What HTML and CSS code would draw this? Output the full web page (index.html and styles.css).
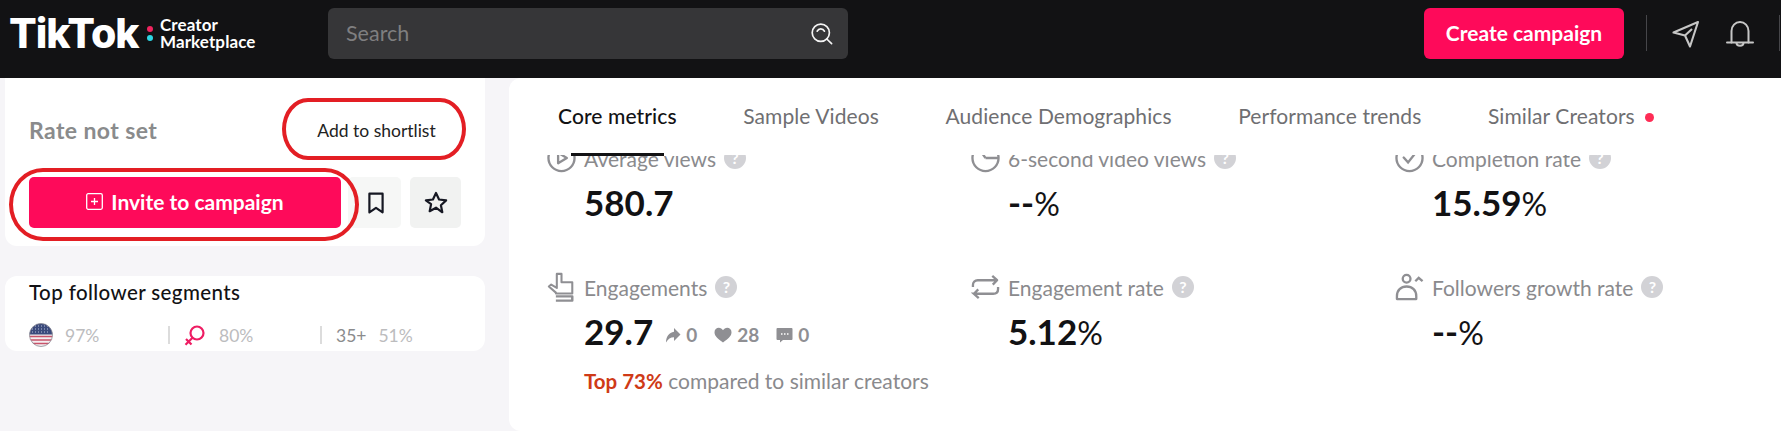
FILE: index.html
```html
<!DOCTYPE html>
<html lang="en">
<head>
<meta charset="utf-8">
<title>TikTok Creator Marketplace</title>
<link rel="stylesheet" href="styles.css">
</head>
<body>
<header class="topbar">
  <div class="logo">
    <span class="logo-word">TikTok</span>
    <span class="logo-dots"><i class="dot-pink"></i><i class="dot-cyan"></i></span>
    <span class="logo-sub"><span class="logo-line">Creator</span><span class="logo-line">Marketplace</span></span>
  </div>
  <div class="search">
    <span class="search-text">Search</span>
    <svg class="search-icon" viewBox="0 0 22 22" fill="none" stroke="#f4f4f4" stroke-width="1.7" stroke-linecap="round"><circle cx="9.8" cy="9.8" r="8.6"/><path d="M15.8 16l4.8 4.6"/><path d="M6.2 8.2c.8-1.7 2.2-2.4 3.6-2.4s2.8.7 3.6 2.4"/></svg>
  </div>
  <button class="create">Create campaign</button>
  <span class="vsep sep-a"></span>
  <svg class="top-icon send" viewBox="0 0 28 28" fill="none" stroke="#c6c6c6" stroke-width="2.1" stroke-linejoin="round"><path d="M26 2 1.5 12.5 13 15.5 18 26.5Z"/><path d="M13 15.5 20 9"/></svg>
  <svg class="top-icon bell" viewBox="0 0 28 28" fill="none" stroke="#c6c6c6" stroke-width="2" stroke-linecap="round"><path d="M1 22.5h26"/><path d="M5.5 22.5V11a8.500 9 0 0 1 17 0v11.500"/><path d="M10.5 23c0 3.500 7 3.500 7 0"/></svg>
  <span class="vsep sep-b"></span>
</header>

<main class="content">
  <aside class="sidebar">
    <section class="card card-rate">
      <div class="rate-row">
        <span class="rate">Rate not set</span>
        <button class="shortlist">Add to shortlist</button>
      </div>
      <div class="actions">
        <button class="invite">
          <svg class="plus-box" viewBox="0 0 17 17" fill="none" stroke="#fff" stroke-width="1.3"><rect x=".7" y=".7" width="15.6" height="15.6" rx="1.5"/><path d="M8.5 5v7M5 8.5h7"/></svg>
          Invite to campaign
        </button>
        <button class="square bookmark-btn">
          <svg class="act-icon" viewBox="0 0 16 20" fill="none" stroke="#161823" stroke-width="2" stroke-linejoin="round"><path d="M2 1.500h12v17l-6-4-6 4Z"/></svg>
        </button>
        <button class="square star-btn">
          <svg class="star-icon" viewBox="0 0 22 22" fill="none" stroke="#161823" stroke-width="2" stroke-linejoin="round"><path d="M11 1.800l2.800 6 6.500.8-4.800 4.400 1.300 6.500L11 15.300l-5.800 3.200 1.300-6.500L1.700 8.600l6.500-.8Z"/></svg>
        </button>
      </div>
      <span class="ring ring-shortlist"></span>
      <span class="ring ring-invite"></span>
    </section>

    <section class="card card-segments">
      <h2 class="seg-title">Top follower segments</h2>
      <div class="seg-row">
        <div class="seg seg-first">
          <svg class="flag" viewBox="0 0 24 24"><defs><clipPath id="flagclip"><circle cx="12" cy="12" r="11.5"/></clipPath></defs><g clip-path="url(#flagclip)"><rect width="24" height="24" fill="#f4eef0"/><path d="M0 13.5h24M0 17h24M0 20.5h24" stroke="#c8536a" stroke-width="1.7"/><rect width="24" height="11.5" fill="#3b4a7c"/><path d="M3 3h18M3 6h18M3 9h18" stroke="#b9c0d8" stroke-width="1" stroke-dasharray="1 2"/></g><circle cx="12" cy="12" r="11.5" fill="none" stroke="#8d8d95" stroke-width=".8"/></svg>
          <span class="pct">97%</span>
        </div>
        <div class="seg seg-second">
          <svg class="female" viewBox="0 0 21 21" fill="none" stroke="#ee1d63" stroke-width="2.2"><circle cx="13" cy="8" r="6.5"/><path d="M8.5 12.800 1.500 19.800M2 14l5.500 5.500"/></svg>
          <span class="pct">80%</span>
        </div>
        <div class="seg seg-third">
          <span class="age">35+</span>
          <span class="pct">51%</span>
        </div>
      </div>
    </section>
  </aside>

  <section class="panel">
    <nav class="tabs">
      <a class="tab tab-active">Core metrics</a>
      <a class="tab">Sample Videos</a>
      <a class="tab">Audience Demographics</a>
      <a class="tab">Performance trends</a>
      <a class="tab tab-dot">Similar Creators</a>
    </nav>
    <div class="metrics-window">
      <div class="metrics">
        <article class="metric">
          <div class="m-head">
            <svg class="m-icon" viewBox="0 0 30 30" fill="none" stroke="#8f8f93" stroke-width="2.4"><circle cx="15" cy="15" r="13.5"/><path d="M11.500 9.500v11l9-5.500Z" stroke-linejoin="round"/></svg>
            <span class="m-label">Average views</span>
            <span class="hint">?</span>
          </div>
          <div class="m-value">580.7</div>
        </article>
        <article class="metric">
          <div class="m-head">
            <svg class="m-icon" viewBox="0 0 30 30" fill="none" stroke="#8f8f93" stroke-width="2.4"><circle cx="15" cy="15" r="13.5"/><path d="M15 15 8 5M15 15h13"/></svg>
            <span class="m-label">6-second video views</span>
            <span class="hint">?</span>
          </div>
          <div class="m-value">--<span class="unit">%</span></div>
        </article>
        <article class="metric">
          <div class="m-head">
            <svg class="m-icon" viewBox="0 0 30 30" fill="none" stroke="#8f8f93" stroke-width="2.4"><circle cx="15" cy="15" r="13.5"/><path d="M9 14.500l4.500 5 8-10" stroke-linecap="round"/></svg>
            <span class="m-label">Completion rate</span>
            <span class="hint">?</span>
          </div>
          <div class="m-value">15.59<span class="unit">%</span></div>
        </article>
        <article class="metric">
          <div class="m-head">
            <svg class="m-icon" viewBox="0 0 30 32" fill="none" stroke="#8f8f93" stroke-width="2.2" stroke-linejoin="round"><path d="M9 22 1.500 15.500 4 13.500l6 3.500V2h5v9h11.500v12H9Z"/><path d="M9 26h17.500v4.500H9" stroke-width="2.6"/></svg>
            <span class="m-label">Engagements</span>
            <span class="hint">?</span>
          </div>
          <div class="m-value m-value-row">
            <span>29.7</span>
            <span class="stats">
              <svg class="stat-icon" viewBox="0 0 16 16" fill="#8f8f93"><path d="M9 1l6.500 6.500L9 14v-3.800C5.500 10.200 3 11.800 1 15.500 1 10 4 5.500 9 4.800Z"/></svg><span class="stat-n">0</span>
              <svg class="stat-icon heart" viewBox="0 0 18 16" fill="#8f8f93"><path d="M9 15.500C3.500 11.500.5 9 .5 5.200.5 2.500 2.500.8 4.800.8 6.500.8 8 1.700 9 3.300 10 1.700 11.500.8 13.200.8c2.300 0 4.300 1.700 4.300 4.400 0 3.800-3 6.300-8.500 10.300Z"/></svg><span class="stat-n">28</span>
              <svg class="stat-icon comment" viewBox="0 0 17 16" fill="#8f8f93"><path d="M1.500 1h14a1 1 0 0 1 1 1v10a1 1 0 0 1-1 1H7l-3 2.500V13H1.500a1 1 0 0 1-1-1V2a1 1 0 0 1 1-1Z"/><path d="M5 7h1.500M8 7h1.500M11 7h1.500" stroke="#fff" stroke-width="1.5"/></svg><span class="stat-n">0</span>
            </span>
          </div>
          <p class="compare"><span class="top">Top 73%</span> compared to similar creators</p>
        </article>
        <article class="metric">
          <div class="m-head">
            <svg class="m-icon" viewBox="0 0 30 26" fill="none" stroke="#8f8f93" stroke-width="2.4"><path d="M2 13V11c0-3 2-5 5-5h20l-5-4.500M27 6l-4.500 4.500" stroke-linejoin="round"/><path d="M28 13v2c0 3-2 5-5 5H3l5 4.500M3 20l4.500-4.500"/></svg>
            <span class="m-label">Engagement rate</span>
            <span class="hint">?</span>
          </div>
          <div class="m-value">5.12<span class="unit">%</span></div>
        </article>
        <article class="metric">
          <div class="m-head">
            <svg class="m-icon" viewBox="0 0 30 30" fill="none" stroke="#8f8f93" stroke-width="2.4"><circle cx="12" cy="6.500" r="4"/><path d="M2 27.500v-3c0-6 4-10 10-10s10 4 10 10v3Z" stroke-linejoin="round"/><path d="M21 9l3.500-3.500L28.500 9"/></svg>
            <span class="m-label">Followers growth rate</span>
            <span class="hint">?</span>
          </div>
          <div class="m-value">--<span class="unit">%</span></div>
        </article>
      </div>
    </div>
  </section>
</main>
</body>
</html>
```

FILE: styles.css
```css
* { box-sizing: border-box; }
html, body { margin: 0; height: 100%; overflow: hidden; }
body {
  display: flex;
  flex-direction: column;
  background: #f6f5f8;
  font-family: "Lato", "Liberation Sans", sans-serif;
  color: #121214;
}
button { font-family: inherit; border: 0; cursor: pointer; }

/* top bar */
.topbar {
  flex: 0 0 78px;
  height: 78px;
  display: flex;
  align-items: flex-start;
  background: #121214;
  padding: 8px 0 0 9px;
}
.logo { display: flex; align-items: center; width: 319px; height: 50px; }
.logo-word {
  font-family: "Inter", "Liberation Sans", sans-serif;
  font-weight: 800;
  font-size: 41px;
  letter-spacing: -1px;
  line-height: 50px;
  color: #fff;
  flex: 0 0 138px;
  overflow: hidden;
}
.logo-dots { display: flex; flex-direction: column; gap: 3px; flex: 0 0 13px; }
.logo-dots i { display: block; width: 6px; height: 6px; border-radius: 50%; }
.dot-pink { background: #f0245f; }
.dot-cyan { background: #2dd6e4; }
.logo-sub { display: flex; flex-direction: column; gap: 0; color: #fff; }
.logo-line { display: block; font-weight: 700; font-size: 17px; line-height: 17px; letter-spacing: .1px; }
.search {
  width: 520px;
  height: 51px;
  display: flex;
  align-items: center;
  justify-content: space-between;
  padding: 0 15px 2px 18px;
  border-radius: 6px;
  background: #363638;
}
.search-text { font-size: 21.5px; color: #7f7f80; }
.search-icon { width: 22px; height: 22px; margin-top: 2px; }
.create {
  margin-left: 576px;
  width: 200px;
  height: 51px;
  padding: 0 0 2px;
  border-radius: 6px;
  background: #fe0a5a;
  color: #fff;
  font-size: 21px;
  font-weight: 700;
}
.vsep { width: 1px; height: 36px; margin-top: 7px; background: #46464a; }
.sep-a { margin-left: 22px; }
.top-icon { width: 28px; height: 28px; margin-top: 12px; }
.send { margin-left: 25px; }
.bell { margin-left: 26px; }
.sep-b { margin-left: 25px; }

/* page */
.content { flex: 1; display: flex; padding-left: 5px; gap: 24px; min-height: 0; }
.sidebar { flex: 0 0 480px; display: flex; flex-direction: column; gap: 30px; }
.card { position: relative; background: #fff; border-radius: 0 0 12px 12px; }
.card-rate { height: 168px; padding: 22px 24px 0; }
.rate-row { display: flex; justify-content: space-between; align-items: center; height: 62px; padding-bottom: 2px; }
.rate { font-size: 23px; font-weight: 700; letter-spacing: .4px; color: #8a8b8c; }
.shortlist { width: 169px; height: 48px; background: #fff; color: #222; font-size: 17.5px; }
.actions { display: flex; margin-top: 15px; height: 51px; }
.invite {
  width: 312px;
  display: flex;
  align-items: center;
  justify-content: center;
  gap: 8px;
  padding: 0 0 2px;
  border-radius: 5px;
  background: #fe0a5a;
  color: #fff;
  font-size: 21px;
  font-weight: 700;
}
.plus-box { width: 17px; height: 17px; }
.square { display: flex; align-items: center; justify-content: center; border-radius: 5px; padding: 0; }
.bookmark-btn { width: 53px; margin-left: 7px; background: #f6f7f6; }
.star-btn { width: 51px; margin-left: 9px; background: #f1f2f1; }
.act-icon { width: 22px; height: 22px; margin-left: 2px; }
.star-icon { width: 24px; height: 24px; }
.ring { position: absolute; border: 4px solid #e31e24; pointer-events: none; }
.ring-shortlist { left: 277px; top: 20px; width: 184px; height: 62px; border-radius: 26px / 50%; }
.ring-invite { left: 4px; top: 90px; width: 350px; height: 73px; border-radius: 34px / 50%; }

.card-segments { height: 75px; padding: 0 24px; border-radius: 12px; }
.seg-title { margin: 0; padding-top: 4px; font-size: 20.5px; font-weight: 500; line-height: 24px; color: #121214; letter-spacing: .4px; }
.seg-row { display: flex; align-items: center; margin-top: 19px; height: 24px; }
.seg { display: flex; align-items: center; }
.seg-first { width: 139px; gap: 12px; }
.seg-second { width: 152px; gap: 14px; padding-left: 14px; border-left: 2px solid #dcdcdc; height: 18px; }
.seg-third { gap: 12px; padding-left: 14px; border-left: 2px solid #dcdcdc; height: 18px; }
.flag { width: 24px; height: 24px; }
.female { width: 21px; height: 21px; }
.pct { font-size: 17.5px; color: #bcbcbe; }
.age { font-size: 17.5px; color: #8b8b8d; }

/* right panel */
.panel {
  flex: 1;
  display: flex;
  flex-direction: column;
  min-width: 0;
  background: #fff;
  border-radius: 12px 0 0 12px;
}
.tabs { flex: 0 0 77px; display: flex; align-items: flex-start; gap: 66.5px; padding-left: 49px; }
.tab { position: relative; height: 77px; font-size: 21px; line-height: 75px; letter-spacing: .1px; color: #6f6f72; white-space: nowrap; }
.tab-active { color: #121214; font-weight: 500; }
.tab-active::after {
  content: "";
  position: absolute;
  left: 13px;
  right: 13px;
  bottom: -1px;
  height: 3px;
  background: #121214;
}
.tab-dot::after {
  content: "";
  position: absolute;
  right: -19px;
  top: 35px;
  width: 9px;
  height: 9px;
  border-radius: 50%;
  background: #fe2c55;
}
.metrics-window { flex: 1; min-height: 0; overflow: hidden; }
.metrics {
  display: grid;
  grid-template-columns: repeat(3, 424px);
  row-gap: 47px;
  margin-top: -13px;
  padding-left: 38px;
}
.m-head { display: flex; align-items: center; height: 32px; }
.m-icon { flex: 0 0 29px; width: 29px; height: 30px; margin-right: 8px; }
.m-label { font-size: 21px; color: #8a8a8d; }
.hint {
  width: 22px;
  height: 22px;
  margin-left: 8px;
  border-radius: 50%;
  background: #d2d2d6;
  color: #fff;
  font-size: 16px;
  font-weight: 700;
  line-height: 22px;
  text-align: center;
}
.m-value { margin: 8px 0 0 37px; font-size: 35px; font-weight: 700; line-height: 40px; color: #121214; }
.unit { font-weight: 400; font-size: 32px; letter-spacing: -.5px; }
.m-value-row { display: flex; align-items: center; gap: 12px; height: 40px; }
.stats { display: flex; align-items: center; font-size: 19px; line-height: 24px; font-weight: 700; color: #8f8f93; padding-top: 8px; }
.stat-icon { width: 16px; height: 16px; margin-right: 5px; }
.stat-n { margin-right: 17px; }
.heart { width: 18px; }
.comment { width: 17px; }
.compare { margin: 18px 0 0 37px; font-size: 21px; line-height: 24px; color: #8a8a8d; }
.top { color: #cf3a17; font-weight: 700; font-size: 20.5px; }
```
